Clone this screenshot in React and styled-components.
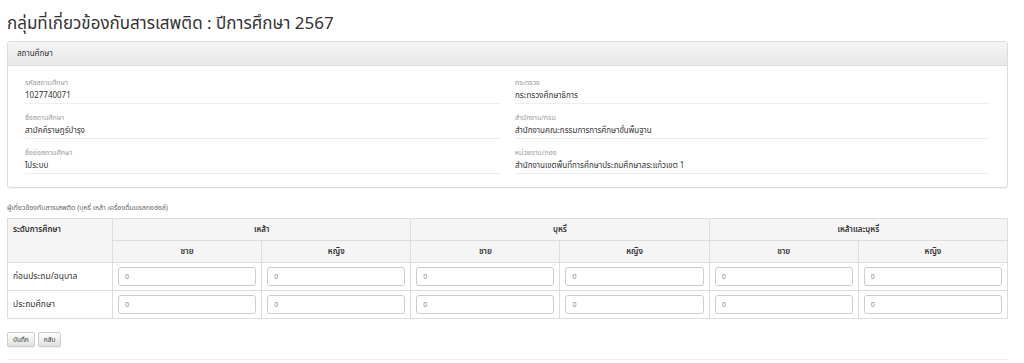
import React from "react";
import styled, { createGlobalStyle } from "styled-components";

const GlobalStyle = createGlobalStyle`
  body {
    margin: 0;
    background: #fff;
    font-family: "Noto Sans Thai", "Noto Sans", "DejaVu Sans", sans-serif;
    color: #333;
  }
`;

const school = [
  { label: "รหัสสถานศึกษา", value: "1027740071" },
  { label: "กระทรวง", value: "กระทรวงศึกษาธิการ" },
  { label: "ชื่อสถานศึกษา", value: "สามัคคีราษฎร์บำรุง" },
  { label: "สำนักงาน/กรม", value: "สำนักงานคณะกรรมการการศึกษาขั้นพื้นฐาน" },
  { label: "ชื่อย่อสถานศึกษา", value: "ไประบบ" },
  { label: "หน่วยงาน/กอง", value: "สำนักงานเขตพื้นที่การศึกษาประถมศึกษาสระแก้วเขต 1" },
];

const groups = ["เหล้า", "บุหรี่", "เหล้าและบุหรี่"];
const levels = ["ก่อนประถม/อนุบาล", "ประถมศึกษา"];

export default function App() {
  return (
    <>
      <GlobalStyle />
      <Page>
        <Title>กลุ่มที่เกี่ยวข้องกับสารเสพติด : ปีการศึกษา 2567</Title>
        <Panel>
          <PanelHeading>สถานศึกษา</PanelHeading>
          <PanelBody>
            {school.map((f) => (
              <Field key={f.label}>
                <FieldLabel>{f.label}</FieldLabel>
                <FieldValue>{f.value}</FieldValue>
              </Field>
            ))}
          </PanelBody>
        </Panel>

        <SectionLabel>ผู้เกี่ยวข้องกับสารเสพติด (บุหรี่ เหล้า เครื่องดื่มแอลกอฮอล์)</SectionLabel>
        <Table>
          <colgroup>
            <col style={{ width: 105 }} />
            {Array.from({ length: 6 }).map((_, i) => (
              <col key={i} />
            ))}
          </colgroup>
          <thead>
            <tr>
              <Th rowSpan={2} $left>
                ระดับการศึกษา
              </Th>
              {groups.map((g) => (
                <Th key={g} colSpan={2}>
                  {g}
                </Th>
              ))}
            </tr>
            <tr>
              {groups.map((g) => (
                <React.Fragment key={g}>
                  <Th>ชาย</Th>
                  <Th>หญิง</Th>
                </React.Fragment>
              ))}
            </tr>
          </thead>
          <tbody>
            {levels.map((l) => (
              <tr key={l}>
                <Td>{l}</Td>
                {Array.from({ length: 6 }).map((_, i) => (
                  <Td key={i}>
                    <Input defaultValue="0" />
                  </Td>
                ))}
              </tr>
            ))}
          </tbody>
        </Table>

        <Buttons>
          <Button>บันทึก</Button>
          <Button>กลับ</Button>
        </Buttons>
        <Rule />
      </Page>
    </>
  );
}

const Page = styled.div`
  width: 1001px;
  padding: 13px 0 0 7px;
`;

const Title = styled.h1`
  margin: 0 0 6px;
  font-size: 17px;
  font-weight: 400;
  line-height: 22px;
  color: #333;
`;

const Panel = styled.div`
  border: 1px solid #ddd;
  border-radius: 3px;
  background: #fff;
  box-shadow: 0 1px 1px rgba(0, 0, 0, 0.04);
`;

const PanelHeading = styled.div`
  height: 24px;
  box-sizing: border-box;
  padding: 0 9px;
  display: flex;
  align-items: center;
  font-size: 8px;
  font-weight: 400;
  color: #333;
  background: linear-gradient(#f5f5f5, #e8e8e8);
  border-bottom: 1px solid #ddd;
`;

const PanelBody = styled.div`
  display: grid;
  grid-template-columns: 475px 475px;
  column-gap: 15px;
  padding: 12px 17px 4px;
`;

const Field = styled.div`
  margin-bottom: 9px;
`;

const FieldLabel = styled.div`
  font-size: 7px;
  line-height: 10px;
  color: #999;
  margin-bottom: 2px;
`;

const FieldValue = styled.div`
  font-size: 8px;
  line-height: 13px;
  color: #333;
  border-bottom: 1px solid #eee;
`;

const SectionLabel = styled.div`
  margin-top: 15px;
  font-size: 7px;
  line-height: 10px;
  color: #666;
  margin-bottom: 5px;
`;

const Table = styled.table`
  width: 1001px;
  border-collapse: collapse;
  table-layout: fixed;
  font-size: 8px;
  line-height: 12px;
`;

const Th = styled.th`
  border: 1px solid #ddd;
  background: #f5f5f5;
  font-weight: 600;
  height: 22px;
  box-sizing: border-box;
  padding: 0 5px;
  text-align: ${(p) => (p.$left ? "left" : "center")};
  vertical-align: ${(p) => (p.$left ? "top" : "middle")};
  padding-top: ${(p) => (p.$left ? "5px" : "0")};
  color: #333;
`;

const Td = styled.td`
  border: 1px solid #ddd;
  height: 28px;
  box-sizing: border-box;
  padding: 0 5px;
  font-size: 8.5px;
  color: #333;
`;

const Input = styled.input`
  display: block;
  width: 100%;
  box-sizing: border-box;
  height: 19px;
  border: 1px solid #ccc;
  border-radius: 3px;
  padding: 0 6px;
  font-family: inherit;
  font-size: 7px;
  color: #888;
  outline: none;
`;

const Buttons = styled.div`
  display: flex;
  gap: 3px;
  margin-top: 13px;
`;

const Button = styled.button`
  height: 15px;
  padding: 0 5px;
  border: 1px solid #ccc;
  border-radius: 2px;
  background: linear-gradient(#fff, #e0e0e0);
  font-family: inherit;
  font-size: 6.5px;
  color: #333;
  box-shadow: 0 1px 1px rgba(0, 0, 0, 0.06);
`;

const Rule = styled.div`
  margin-top: 12px;
  border-top: 1px solid #eee;
`;
